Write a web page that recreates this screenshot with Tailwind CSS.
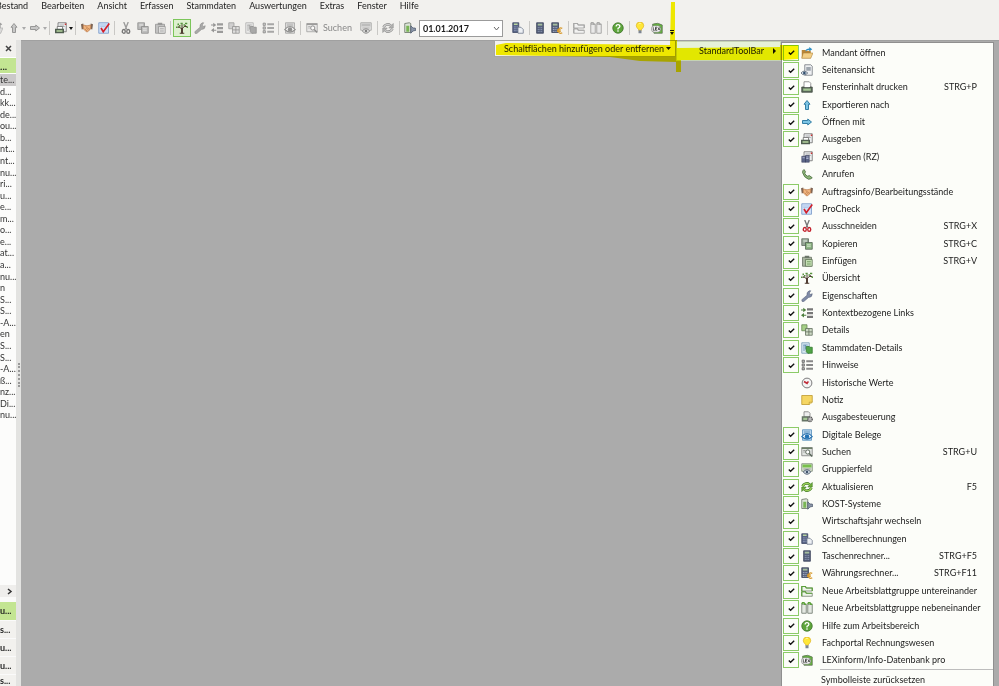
<!DOCTYPE html>
<html lang="de">
<head>
    <meta charset="UTF-8">
    <meta name="viewport" content="width=device-width, initial-scale=1.0">
    <title>Rechnungswesen</title>
    <script src="https://cdn.jsdelivr.net/npm/@tailwindcss/browser@4"></script>
</head>
<body class="h-screen overflow-hidden flex flex-col bg-[#f2f1ee] text-[#1c1c1c] font-['Lato','Open_Sans',sans-serif] text-[9px] leading-3">

    <!-- icon set -->
    <svg class="hidden">
        <symbol id="open" viewBox="0 0 16 16"><path d="M1 4h5l1 1h6v10H1z" fill="#b98537"/><path d="M3 8h13l-3 7H1z" fill="#f3cf86" stroke="#a87a30" stroke-width=".7"/><path d="M6 6c0-3 2-4 5-4V0l4 3-4 3V4c-2 0-3 0-5 2z" fill="#2e8fc4"/></symbol>
        <symbol id="preview" viewBox="0 0 16 16"><path d="M5 1h8l2 2v12H5z" fill="#eef0f2" stroke="#6b7178"/><path d="M7 4h6v5H7z" fill="#9ea6ae"/><path d="M0 12q4-5 9 0q-5 5-9 0z" fill="#dce4ec" stroke="#4d5c6c"/><circle cx="4.500" cy="12" r="1.800" fill="#31506e"/></symbol>
        <symbol id="print" viewBox="0 0 16 16"><path d="M4 1h7l2 2v6H4z" fill="#fff" stroke="#777"/><path d="M1 8h3v1h8V8h3v7H1z" fill="#5c6b5c" stroke="#3d473d"/><path d="M3 10h10v3H3z" fill="#a5c795"/></symbol>
        <symbol id="up" viewBox="0 0 16 16"><path d="M8 2l4 5h-2v7H6V7H4z" fill="#7cc4e4" stroke="#24739c" stroke-width="1.200"/></symbol>
        <symbol id="right" viewBox="0 0 16 16"><path d="M14 8l-5 4v-2H2V6h7V4z" fill="#7cc4e4" stroke="#24739c" stroke-width="1.200"/></symbol>
        <symbol id="output" viewBox="0 0 16 16"><path d="M4 1h11v12H4z" fill="#eceeef" stroke="#666"/><path d="M6 4h6M6 6h7" stroke="#999"/><path d="M13 2h2v2h-2z" fill="#c33"/><path d="M3 6h7v5H3z" fill="#fff" stroke="#666"/><path d="M0 9h12v6H0z" fill="#4f5d4f"/><path d="M2 11h8v2H2z" fill="#b6d69f"/></symbol>
        <symbol id="outputrz" viewBox="0 0 16 16"><path d="M4 1h11v12H4z" fill="#eceeef" stroke="#666"/><path d="M6 4h6M6 6h7" stroke="#999"/><path d="M13 2h2v2h-2z" fill="#c33"/><path d="M1 7h5v8H1zM6 6h5v9H6z" fill="#5b6587" stroke="#3b4260" stroke-width=".7"/><path d="M2 9h3M7 8h3M7 10h3" stroke="#c8cee4"/></symbol>
        <symbol id="phone" viewBox="0 0 16 16"><path d="M4 2l2 3-1 2q1 3 4 4l2-1 4 3q-2 2-5 2Q4 13 2 6q0-3 2-4z" fill="#8db67a" stroke="#3f6331"/></symbol>
        <symbol id="hands" viewBox="0 0 16 16"><path d="M0 3l3-1 1 7-3 1zM16 3l-3-1-1 7 3 1z" fill="#7d6555"/><path d="M3 4l5 1 5-1v5l-4 4H7L3 9z" fill="#f0b47e" stroke="#b06d3e" stroke-width=".8"/><path d="M6 6l3 2 3 2M5 9l3 3M7 8l3 3" stroke="#a8683a" stroke-width=".7" fill="none"/></symbol>
        <symbol id="procheck" viewBox="0 0 16 16"><path d="M1 1h13v14H1z" fill="#cfe1f8" stroke="#6f92c4"/><path d="M3 4h8M3 6h7" stroke="#a9c3e6"/><path d="M4 8l3 5 8-11" stroke="#d2202a" stroke-width="2.200" fill="none"/></symbol>
        <symbol id="cut" viewBox="0 0 16 16"><path d="M5 0l4 10M11 0L7 10" stroke="#777" stroke-width="1.800"/><ellipse cx="5" cy="12.500" rx="2" ry="2.500" fill="none" stroke="#c3202c" stroke-width="1.800"/><ellipse cx="11" cy="12.500" rx="2" ry="2.500" fill="none" stroke="#c3202c" stroke-width="1.800"/></symbol>
        <symbol id="copy" viewBox="0 0 16 16"><path d="M1 1h9v9H1z" fill="#95a595" stroke="#5b665b"/><path d="M3 3h5M3 5h5" stroke="#dfe8df"/><path d="M6 6h9v9H6z" fill="#8cb583" stroke="#4e5f4e"/><path d="M8 9h5M8 11h5" stroke="#e5f2e0"/></symbol>
        <symbol id="paste" viewBox="0 0 16 16"><path d="M2 3h12v12H2z" fill="#a7b39e" stroke="#626b5d"/><path d="M5 1h6v3H5z" fill="#6d776a"/><path d="M6 6h9v9H6z" fill="#c5e0b4" stroke="#5f7355"/><path d="M8 9h5M8 12h5" stroke="#5f8a4b"/></symbol>
        <symbol id="tree" viewBox="0 0 16 16"><path d="M8 15V8M5 15h6M8 10L3 5M8 9l5-5M8 8V3M5 7H2M11 6h4" stroke="#49342a" stroke-width="1.300" fill="none"/><path d="M8 8v7" stroke="#49342a" stroke-width="2.400"/><path d="M2 2h2v2H2zM6 1h3v2H6zM12 1h3v2h-3zM0 6h2v2H0zM14 6h2v2h-2zM4 4h2v2H4zM10 3h2v2h-2z" fill="#56933d"/></symbol>
        <symbol id="wrench" viewBox="0 0 16 16"><path d="M1 13L8 7q-1-4 3-6l2 0-2 3 1 2 3-1q0 5-5 5l-7 6q-2 0-2-3z" fill="#7f8aa6" stroke="#566079" stroke-width=".7"/></symbol>
        <symbol id="context" viewBox="0 0 16 16"><path d="M8 3h8M8 8h8M8 13h8" stroke="#777" stroke-width="3"/><path d="M0 4h4M2 11h5" stroke="#4d7f3e" stroke-width="1.500"/><path d="M3 1l4 3-4 3zM4 8l-4 3 4 3z" fill="#4d7f3e"/></symbol>
        <symbol id="details" viewBox="0 0 16 16"><path d="M1 1h7v8H1z" fill="#a6d087" stroke="#61804f"/><path d="M6 6h9v9H6z" fill="#cddac5" stroke="#5c6957"/><path d="M6 10.500h9M10.500 6v9" stroke="#5c6957"/></symbol>
        <symbol id="master" viewBox="0 0 16 16"><path d="M1 1h10v14H1z" fill="#d8e8f3" stroke="#7295ae"/><path d="M3 4h6M4 4v8M6 4v6" stroke="#5787a9"/><path d="M7 6h4l1 1h3v8H9L7 13z" fill="#50a447" stroke="#2e762a"/></symbol>
        <symbol id="hints" viewBox="0 0 16 16"><path d="M7 3h9M7 8h9M7 13h9" stroke="#888" stroke-width="2.800"/><path d="M1.500 1.500h3v3h-3zM1.500 6.500h3v3h-3zM1.500 11.500h3v3h-3z" fill="#bbb" stroke="#555"/></symbol>
        <symbol id="history" viewBox="0 0 16 16"><circle cx="8" cy="8" r="6.500" fill="#f4f4f4" stroke="#777" stroke-width="1.300"/><path d="M9 9L4 6M8 8l2-2" stroke="#c02b38" stroke-width="2.200"/></symbol>
        <symbol id="note" viewBox="0 0 16 16"><path d="M1 2h14v9l-4 3H1z" fill="#f5d662" stroke="#b99427"/><path d="M11 14v-3h4" fill="#fff1b0" stroke="#b99427"/></symbol>
        <symbol id="control" viewBox="0 0 16 16"><path d="M4 1h6l2 2v5H4z" fill="#eee" stroke="#777"/><path d="M1 7h10v7H1z" fill="#667466"/><path d="M3 9h6v3H3z" fill="#a5c795"/><circle cx="12" cy="11" r="3" fill="#bbb" stroke="#555" stroke-width="1.800" stroke-dasharray="1.500 .8"/></symbol>
        <symbol id="docs" viewBox="0 0 16 16"><path d="M2 1h12v14H2z" fill="#b9d6ee" stroke="#4c87b7"/><path d="M4 3h8M4 5h8" stroke="#6d9cc0"/><path d="M1 10q7-8 14 0q-7 7-14 0z" fill="#fff" stroke="#2b73ae" stroke-width="1.500"/><circle cx="8" cy="10" r="3" fill="#2272b4"/></symbol>
        <symbol id="search" viewBox="0 0 16 16"><path d="M1 2h14v11H1z" fill="#e2e5e2" stroke="#777"/><path d="M1 2h14v2H1z" fill="#6d7f66"/><path d="M3 6h3M3 8h2" stroke="#888"/><circle cx="9" cy="8" r="2.800" fill="#fff" stroke="#5a675a" stroke-width="1.300"/><path d="M11 10l4 4" stroke="#5a675a" stroke-width="2"/></symbol>
        <symbol id="group" viewBox="0 0 16 16"><path d="M1 1h14v10H1z" fill="#dfe9da" stroke="#6c7a66"/><path d="M2 2h12v4H2z" fill="#78c04c"/><path d="M3 8h10" stroke="#777"/><path d="M3 12q5-6 10 0q-5 6-10 0z" fill="#dde6ee" stroke="#4d5c6c" stroke-width="1.300"/><circle cx="8" cy="12" r="1.800" fill="#3f546b"/></symbol>
        <symbol id="refresh" viewBox="0 0 16 16"><path d="M2 7q2-4 7-4l3 2M14 9q-2 4-7 4l-3-2" stroke="#3f7a22" stroke-width="3.400" fill="none"/><path d="M2 7q2-4 7-4l3 2M14 9q-2 4-7 4l-3-2" stroke="#a5d75e" stroke-width="1.600" fill="none"/><path d="M15 2v6H9zM1 14V8h6z" fill="#6fb03a" stroke="#3f7a22" stroke-width=".8"/></symbol>
        <symbol id="kost" viewBox="0 0 16 16"><path d="M1 2l6-1 2 1v12H1z" fill="#dde5d8" stroke="#5e6959"/><path d="M3 5h4v8H3z" fill="#79b555"/><path d="M9 5l3 3h3l1 3-4 1-3 3z" fill="#8b96a8" stroke="#4d586c"/></symbol>
        <symbol id="quick" viewBox="0 0 16 16"><path d="M1 1h8v13H1z" fill="#566284" stroke="#3a4360"/><path d="M2.500 3h5" stroke="#b9d69f" stroke-width="2"/><path d="M2.500 6.500h5M2.500 9h5M2.500 11.500h5" stroke="#a9b3cc" stroke-dasharray="1.300 .6"/><path d="M8 7h4l3 3v5H8z" fill="#edf0f4" stroke="#6a7486"/></symbol>
        <symbol id="calc" viewBox="0 0 16 16"><path d="M3.500 1h9v14h-9z" fill="#56607a" stroke="#353d55"/><path d="M5 3.500h6" stroke="#a5bd9e" stroke-width="2.500"/><path d="M5 7.500h6M5 10h6M5 12.500h6" stroke="#8d98b4" stroke-width="1.200" stroke-dasharray="1.500 .7"/></symbol>
        <symbol id="currency" viewBox="0 0 16 16"><path d="M1 1h9v13H1z" fill="#56607a" stroke="#353d55"/><path d="M2.500 3.500h6" stroke="#a5bd9e" stroke-width="2.500"/><path d="M2.500 7.500h6M2.500 10h5M2.500 12.500h5" stroke="#a9b3cc" stroke-width="1.200" stroke-dasharray="1.500 .7"/><path d="M15 8.500q-5-2-5 3t5 3M8 10.500h5M8 12.500h5" stroke="#d89a2c" stroke-width="1.600" fill="none"/></symbol>
        <symbol id="stack" viewBox="0 0 16 16"><path d="M1 2h5l1 2h8v4H1zM1 9h5l1 2h8v4H1z" fill="#eef5ea" stroke="#6d7868"/><path d="M1 8V2h5l1 2h8v4M1 15V9h5l1 2h8" fill="none" stroke="#5ba138" stroke-width="1.600"/></symbol>
        <symbol id="side" viewBox="0 0 16 16"><path d="M1 3h6v12H1zM9 3h6v12H9z" fill="#e4e8e2" stroke="#7b8378" stroke-width="1.200"/><path d="M1 3l1-2h2l1 2h2M9 3l1-2h2l1 2h2" fill="none" stroke="#5ba138" stroke-width="2"/></symbol>
        <symbol id="help" viewBox="0 0 16 16"><circle cx="8" cy="8" r="7" fill="#5da53a" stroke="#3c6f28"/><path d="M5.500 6q0-2.500 2.500-2.500T10.500 6q0 1.300-2.500 2.500v1.500M8 11v2" stroke="#fff" stroke-width="1.700" fill="none"/></symbol>
        <symbol id="bulb" viewBox="0 0 16 16"><path d="M8 0q5 0 5 5 0 2-3 5v1H6v-1Q3 7 3 5q0-5 5-5z" fill="#ffe737" stroke="#d8aa18" stroke-width=".8"/><path d="M6 11h4v4H6z" fill="#7d8590"/><path d="M6 3q1-2 3-1" stroke="#fffbd0" fill="none"/></symbol>
        <symbol id="lex" viewBox="0 0 16 16"><path d="M2 3q7-3 13 1v11H4z" fill="#64b43c" stroke="#5f6f58"/><rect x=".5" y="5" width="12.500" height="8.500" rx="4" fill="#f7f7f7" stroke="#777" stroke-width=".8"/><path d="M3 7v4h2M8 7H6v4h2M6 9h2M9 7l3 4M12 7l-3 4" stroke="#222" fill="none"/></symbol>
        <symbol id="check" viewBox="0 0 10 10"><path d="M2 5l2 2 4-4" stroke="#111" stroke-width="1.500" fill="none"/></symbol>
    </svg>

    <nav class="flex h-3 shrink-0 gap-[13px]">
        <a href="#" class="-ml-1">Bestand</a>
        <a href="#">Bearbeiten</a>
        <a href="#">Ansicht</a>
        <a href="#">Erfassen</a>
        <a href="#">Stammdaten</a>
        <a href="#">Auswertungen</a>
        <a href="#">Extras</a>
        <a href="#">Fenster</a>
        <a href="#">Hilfe</a>
    </nav>

    <div id="toolbar" class="flex h-7 shrink-0 items-center pt-1"></div>

    <div class="flex flex-1 min-h-0">
        <aside class="flex flex-col w-4 shrink-0 overflow-hidden whitespace-nowrap">
            <button class="flex h-[17px] shrink-0 items-center justify-end pr-1" aria-label="Schließen">
                <svg class="size-[7px]" viewBox="0 0 7 7"><path d="M1 1l5 5M6 1L1 6" stroke="#444" stroke-width="1.500"/></svg>
            </button>
            <div class="h-4 shrink-0 bg-[#c3e592] border-t border-white font-bold text-[10px] leading-4">...</div>
            <ul id="tree-list" class="flex flex-col h-[348px] shrink-0 bg-[#fcfcfb] text-[#333] pt-px"></ul>
            <div class="flex-1 bg-[#fcfcfb]"></div>
            <button class="flex h-3 shrink-0 items-center justify-end bg-[#efeeec] pr-[3px]" aria-label="Mehr">
                <svg class="size-[7px]" viewBox="0 0 7 7"><path d="M2 1l3 2.500L2 6" stroke="#333" stroke-width="1.500" fill="none"/></svg>
            </button>
            <div class="h-[5px] shrink-0 bg-[#fafaf9]"></div>
            <button class="h-[18px] shrink-0 bg-[#c3e592] text-left font-bold">u...</button>
            <button class="h-[18px] shrink-0 border-t border-[#fafafa] text-left font-bold">s...</button>
            <button class="h-[18px] shrink-0 border-t border-[#fafafa] text-left font-bold">u...</button>
            <button class="h-[18px] shrink-0 border-t border-[#fafafa] text-left font-bold">u...</button>
            <button class="h-[12px] shrink-0 border-t border-[#fafafa] text-left font-bold">s...</button>
        </aside>
        <div class="w-[5px] shrink-0 bg-[#e3e3e1] flex items-center justify-center">
            <div class="h-6 mt-6 border-l-2 border-dotted border-[#999]"></div>
        </div>
        <main class="flex-1 bg-[#ababab] border-t border-[#a0a0a0]"></main>
    </div>

    <!-- opened menus, cascading to the right -->
    <div class="absolute top-10 bottom-0 left-[494px] right-[5px] flex items-start">
        <button class="w-[182px] h-[17px] shrink-0 flex items-center bg-[#f2f1ee] border border-[#a5a5a5] pl-[9px] pr-1">
            <span class="flex-1 text-left">Schaltflächen hinzufügen oder entfernen</span>
            <svg class="w-[5px] h-[3px]" viewBox="0 0 5 3"><path d="M0 0h5L2.500 3z" fill="#111"/></svg>
        </button>
        <button class="w-[105px] h-5 mt-px shrink-0 flex items-center bg-[#e6f1d8] border border-[#c5d3b4] pl-[22px] pr-1">
            <span class="flex-1 text-left">StandardToolBar</span>
            <svg class="w-[3px] h-[6px]" viewBox="0 0 3 6"><path d="M0 0v6l3-3z" fill="#111"/></svg>
        </button>
        <div class="flex-1 min-w-0 self-stretch mt-[2px] flex flex-col bg-[#fcfdf9] border-x border-t border-[#8f8f8f] pt-px">
            <ul id="menu" class="flex-1 flex flex-col"></ul>
            <div class="ml-[38px] border-t border-[#bdbdbd]"></div>
            <button class="h-4 pl-[39px] pt-[3px] text-left">Symbolleiste zurücksetzen</button>
        </div>
    </div>

    <!-- marker strokes -->
    <svg class="absolute top-0 left-[490px] w-[310px] h-20 mix-blend-multiply pointer-events-none" viewBox="0 0 310 80">
        <path d="M181 2h4v38h2v8l103-1v-2h18v14l-16 1H191v12h-5V62L150 61 120 57 60 56 6 55V45l10-2 164 2z" fill="#fbf500"/>
    </svg>

    <script>
        const icon = (id) => `<svg class="size-3 shrink-0"><use href="#${id}"/></svg>`;

        // name, icon, checked, shortcut
        const items = [
            ["Mandant öffnen", "open", 1], ["Seitenansicht", "preview", 1], ["Fensterinhalt drucken", "print", 1, "STRG+P"],
            ["Exportieren nach", "up", 1], ["Öffnen mit", "right", 1], ["Ausgeben", "output", 1],
            ["Ausgeben (RZ)", "outputrz", 0], ["Anrufen", "phone", 0], ["Auftragsinfo/Bearbeitungsstände", "hands", 1],
            ["ProCheck", "procheck", 1], ["Ausschneiden", "cut", 1, "STRG+X"], ["Kopieren", "copy", 1, "STRG+C"],
            ["Einfügen", "paste", 1, "STRG+V"], ["Übersicht", "tree", 1], ["Eigenschaften", "wrench", 1],
            ["Kontextbezogene Links", "context", 1], ["Details", "details", 1], ["Stammdaten-Details", "master", 1],
            ["Hinweise", "hints", 1], ["Historische Werte", "history", 0], ["Notiz", "note", 0],
            ["Ausgabesteuerung", "control", 0], ["Digitale Belege", "docs", 1], ["Suchen", "search", 1, "STRG+U"],
            ["Gruppierfeld", "group", 1], ["Aktualisieren", "refresh", 1, "F5"], ["KOST-Systeme", "kost", 1],
            ["Wirtschaftsjahr wechseln", "", 1], ["Schnellberechnungen", "quick", 1], ["Taschenrechner...", "calc", 1, "STRG+F5"],
            ["Währungsrechner...", "currency", 1, "STRG+F11"], ["Neue Arbeitsblattgruppe untereinander", "stack", 1],
            ["Neue Arbeitsblattgruppe nebeneinander", "side", 1], ["Hilfe zum Arbeitsbereich", "help", 1],
            ["Fachportal Rechnungswesen", "bulb", 1], ["LEXinform/Info-Datenbank pro", "lex", 1]
        ];
        document.getElementById("menu").innerHTML = items.map(([name, id, on, key], i) => `
            <li class="flex-1 min-h-0">
                <label for="item${i}" class="flex h-full items-center pl-px pr-4 whitespace-nowrap">
                    <span class="relative flex size-4 shrink-0 items-center justify-center">
                        <input type="checkbox" id="item${i}" ${on ? "checked" : ""} class="peer absolute inset-0 size-4 appearance-none checked:border checked:border-[#8ccb68]">
                        <svg class="relative size-[9px] hidden peer-checked:block"><use href="#check"/></svg>
                    </span>
                    <span class="ml-[2px] mr-[9px] flex size-3 shrink-0">${id ? icon(id) : ""}</span>
                    <span class="flex-1">${name}</span>
                    <span>${key || ""}</span>
                </label>
            </li>`).join("");

        const rows = ["te...", "d...", "kk...", "de...", "ou...", "b...", "nt...", "nt...", "nu...", "ri...", "u...", "e...", "m...", "o...", "e...",
            "at...", "a...", "nu...", "n", "S...", "S...", "-A...", "en", "S...", "S...", "-A...", "ß...", "nz...", "Di...", "nu..."];
        document.getElementById("tree-list").innerHTML = rows.map((text, i) =>
            `<li class="flex-1 min-h-0 leading-3 ${i ? "" : "bg-[#cbc9c9]"}">${text}</li>`).join("");

        const sep = `<span class="flex w-[5px] h-[14px] shrink-0 justify-center"><span class="border-l border-[#c9c8c5]"></span></span>`;
        const caret = (color) => `<svg class="w-1 h-[3px] shrink-0" viewBox="0 0 4 3"><path d="M0 0h4L2 3z" fill="${color}"/></svg>`;
        const on = (id) => `<button class="flex w-[17px] shrink-0 justify-center" aria-label="${id}">${icon(id)}</button>`;
        const off = (id) => `<button class="flex w-[17px] shrink-0 justify-center grayscale opacity-70" aria-label="${id}">${icon(id)}</button>`;
        document.getElementById("toolbar").innerHTML = [
            `<span class="-ml-3 flex">${off("open")}</span>`, off("up"), caret("#aaa"), off("right"), caret("#aaa"), sep,
            on("output"), caret("#111"), sep, on("hands"), on("procheck"), sep,
            off("cut"), off("copy"), off("paste"), sep,
            `<button class="flex size-[18px] shrink-0 items-center justify-center border border-[#7cc65a] bg-[#dff0d0]" aria-label="Übersicht">${icon("tree")}</button>`,
            off("wrench"), off("context"), off("details"), off("master"), off("hints"), sep,
            off("docs"), sep,
            `<button class="flex shrink-0 items-center gap-[5px] pl-[3px] pr-[6px] text-[#888]"><span class="grayscale opacity-70">${icon("search")}</span>Suchen</button>`,
            off("group"), sep, off("refresh"), sep, on("kost"),
            `<span class="relative mr-[7px] flex w-[84px] shrink-0">
                <input type="text" value="01.01.2017" aria-label="Datum" class="w-full h-[17px] border border-[#9b9b9b] bg-white pl-[3px] font-bold text-[9px]">
                <svg class="absolute right-[3px] top-[6px] w-[7px] h-[5px]" viewBox="0 0 7 5"><path d="M1 1l2.500 3L6 1" stroke="#666" fill="none"/></svg>
            </span>`,
            on("quick"), sep, on("calc"), on("currency"), sep, off("stack"), off("side"), sep, on("help"), sep, on("bulb"), on("lex"),
            `<button class="ml-1 mt-2 flex flex-col items-center gap-px" aria-label="Optionen"><span class="w-1 border-t border-[#111]"></span>${caret("#111")}</button>`
        ].join("");
    </script>
</body>
</html>
